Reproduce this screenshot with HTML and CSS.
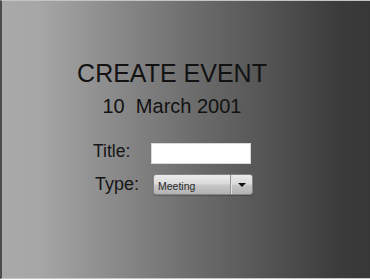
FILE: index.html
```html
<!DOCTYPE html>
<html>
<head>
<meta charset="utf-8">
<link rel="stylesheet" href="styles.css">
</head>
<body>
<div class="screen">
  <h1 class="title">CREATE EVENT</h1>
  <div class="date">10&nbsp; March 2001</div>
  <div class="form">
    <div class="row row-title">
      <label class="label label-title">Title:</label>
      <div class="input"></div>
    </div>
    <div class="row row-type">
      <label class="label">Type:</label>
      <div class="select">
        <span class="select-value">Meeting</span>
        <span class="select-btn"><span class="arrow"></span></span>
      </div>
    </div>
  </div>
</div>
</body>
</html>
```
FILE: styles.css
```css
html, body {
  margin: 0;
  padding: 0;
}
body {
  width: 370px;
  height: 280px;
  overflow: hidden;
  font-family: "Liberation Sans", Arial, sans-serif;
  color: #111;
}
.screen {
  box-sizing: border-box;
  width: 370px;
  height: 279px;
  border-left: 2px solid #4c4c4c;
  border-top: 1px solid #c4c4c4;
  border-bottom: 1px solid #c8c8c8;
  background: linear-gradient(to right, #a9a9a9 0px, #a6a6a6 38px, #6f6f6f 185px, #3b3b3b 338px, #373737 370px);
  display: flex;
  flex-direction: column;
  align-items: center;
  padding: 58px 28px 0 0;
}
.title {
  margin: 0;
  font-size: 25px;
  font-weight: normal;
  line-height: 28px;
  color: #121212;
}
.date {
  margin-top: 7px;
  font-size: 20px;
  line-height: 24px;
  color: #121212;
}
.form {
  align-self: flex-start;
  margin-top: 25px;
  margin-left: 91px;
  display: flex;
  flex-direction: column;
  gap: 10px;
}
.row {
  display: flex;
  align-items: center;
  height: 21px;
}
.row-type {
  padding-left: 2px;
}
.label {
  width: 58px;
  font-size: 18px;
  line-height: 21px;
  color: #151515;
}
.label-title {
  margin-top: -5px;
  font-size: 17.5px;
}
.input {
  box-sizing: border-box;
  width: 100px;
  height: 21px;
  background: #fff;
  border: 1px solid #d8d8d8;
}
.select {
  box-sizing: border-box;
  width: 100px;
  height: 21px;
  display: flex;
  border: 1px solid #858585;
  border-radius: 3px;
  background: linear-gradient(to bottom, #ececec 0%, #dadada 45%, #c6c6c6 55%, #b2b2b2 100%);
  box-shadow: 0 1px 1px rgba(0,0,0,0.2);
}
.select-value {
  flex: 1;
  padding-left: 4px;
  padding-top: 1px;
  font-size: 10.5px;
  line-height: 20px;
  color: #2a2a2a;
  border-right: 1px solid #939393;
  box-shadow: 1px 0 0 #e4e4e4;
}
.select-btn {
  width: 21px;
  display: flex;
  align-items: center;
  justify-content: center;
}
.arrow {
  width: 0;
  height: 0;
  border-left: 4px solid transparent;
  border-right: 4px solid transparent;
  border-top: 4px solid #111;
}
```
